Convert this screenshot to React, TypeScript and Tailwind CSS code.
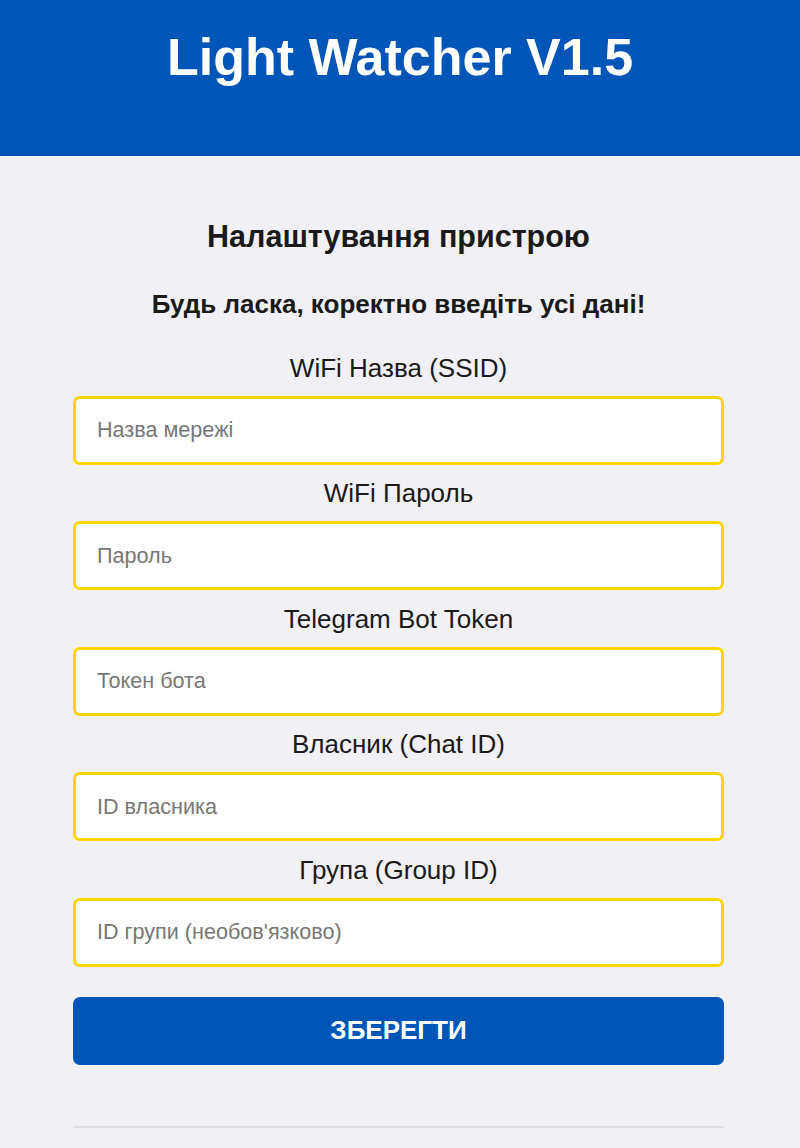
import React from 'react';

const fields = [
  { label: 'WiFi Назва (SSID)', placeholder: 'Назва мережі', type: 'text' },
  { label: 'WiFi Пароль', placeholder: 'Пароль', type: 'password' },
  { label: 'Telegram Bot Token', placeholder: 'Токен бота', type: 'text' },
  { label: 'Власник (Chat ID)', placeholder: 'ID власника', type: 'text' },
  { label: 'Група (Group ID)', placeholder: "ID групи (необов'язково)", type: 'text' },
];

export default function App() {
  return (
    <div className="min-h-screen bg-[#f0f0f5] text-[#1a1a1a] font-['Liberation_Sans',Arial,sans-serif]">
      <header className="h-[156px] bg-[#0055b8] pt-[31px] text-center">
        <h1 className="text-[52px] leading-none font-bold text-white">Light Watcher V1.5</h1>
      </header>

      <main className="pl-[73px] pr-[76px] pb-[20px]">
        <h2 className="mt-[65px] text-center text-[30.5px] leading-none font-bold">Налаштування пристрою</h2>
        <p className="mt-[39px] text-center text-[26px] leading-none font-bold">Будь ласка, коректно введіть усі дані!</p>

        <form className="mt-[36px] flex flex-col" onSubmit={e => e.preventDefault()}>
          {fields.map((f, i) => (
            <div key={f.label} className={i === 0 ? '' : 'mt-[13.5px]'}>
              <label className="block h-[30px] text-center text-[26px] leading-[30px]">{f.label}</label>
              <input
                type={f.type}
                placeholder={f.placeholder}
                className="mt-[13px] block h-[69px] w-full rounded-[7px] border-[3px] border-[#ffd500] bg-white px-[21px] text-[21.6px] outline-none placeholder:text-[#777777]"
              />
            </div>
          ))}

          <button
            type="submit"
            className="mt-[30px] h-[68px] w-full rounded-[7px] bg-[#0055b8] text-[26px] font-bold text-white"
          >
            ЗБЕРЕГТИ
          </button>
        </form>

        <hr className="mt-[61px] border-0 h-[2px] bg-[#dcdce2]" />
      </main>
    </div>
  );
}
